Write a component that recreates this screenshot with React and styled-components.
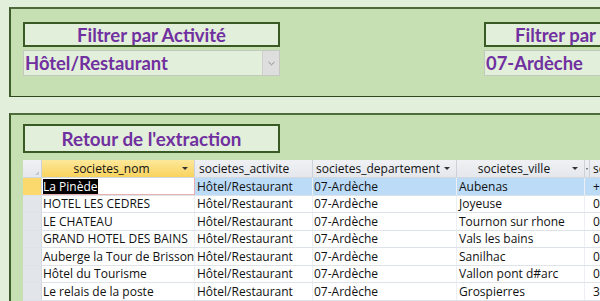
import React from "react";
import styled, { createGlobalStyle } from "styled-components";

const Global = createGlobalStyle`
  html, body { margin: 0; padding: 0; background: #e2efda; overflow: hidden; }
  #root { width: 600px; height: 301px; overflow: hidden; }
`;

const Page = styled.div`
  width: 600px;
  height: 301px;
  overflow: hidden;
  box-sizing: border-box;
  padding: 7px 0 0 9px;
  background: #e2efda;
  display: flex;
  flex-direction: column;
  gap: 16px;
`;

const Panel = styled.section`
  flex: none;
  width: 800px;
  box-sizing: border-box;
  background: #c6e0b4;
  border-style: solid;
  border-color: #4e6b3a #2f4a1d #2f4a1d #3f5c2b;
  border-width: 2px 1px 1px 2px;
  padding: ${(p) => p.$pad};
  display: flex;
  flex-direction: ${(p) => (p.$col ? "column" : "row")};
  gap: ${(p) => p.$gap};
`;

const FilterGroup = styled.div`
  width: 257px;
  display: flex;
  flex-direction: column;
  gap: 3px;
`;

const LabelBox = styled.div`
  box-sizing: border-box;
  width: 257px;
  height: ${(p) => p.$h}px;
  border: 2px solid #395a25;
  background: #e2efda;
  color: #7030a0;
  font-family: "Lato", "Liberation Sans", sans-serif;
  font-weight: 700;
  font-size: ${(p) => p.$size}px;
  display: flex;
  align-items: center;
  justify-content: center;
  white-space: nowrap;
  overflow: hidden;
`;

const Combo = styled.div`
  box-sizing: border-box;
  width: 257px;
  height: 26px;
  border: 1px solid #c3c9c0;
  background: #e2efda;
  display: flex;
  align-items: stretch;
`;

const ComboText = styled.div`
  flex: 1;
  padding-left: 1px;
  color: #7030a0;
  font-family: "Lato", "Liberation Sans", sans-serif;
  font-weight: 700;
  font-size: 18.4px;
  display: flex;
  align-items: center;
  white-space: nowrap;
  overflow: hidden;
`;

const ComboButton = styled.div`
  width: 16px;
  background: #dedede;
  border-left: 1px solid #cfcfcf;
  display: flex;
  align-items: center;
  justify-content: center;
`;

const Grid = styled.div`
  width: 700px;
  display: flex;
  flex-direction: column;
  font-family: "Open Sans", "Noto Sans", sans-serif;
  font-size: 12px;
  color: #111;
`;

const cols = "19px 153px 118px 144px 128px 1fr";

const HeaderRow = styled.div`
  display: grid;
  grid-template-columns: ${cols};
  height: 18px;
  background: #e8eaee;
  border-bottom: 1px solid #d3d7de;
  box-sizing: border-box;
`;

const HeadCell = styled.div`
  box-sizing: border-box;
  display: flex;
  align-items: center;
  padding: 0 ${(p) => (p.$left ? 4 : 3)}px;
  border-right: 1px solid #cdd2da;
  background: ${(p) =>
    p.$active ? "linear-gradient(#fde89a, #f9d35e)" : "linear-gradient(#eff1f4, #e4e7ec)"};
  overflow: hidden;
  position: relative;
`;

const HeadText = styled.span`
  flex: 1;
  min-width: 0;
  text-align: ${(p) => (p.$left ? "left" : "center")};
  white-space: nowrap;
  overflow: hidden;
`;

const Arrow = styled.span`
  flex: none;
  width: 0;
  height: 0;
  margin: 0 3px 0 4px;
  border-left: 3px solid transparent;
  border-right: 3px solid transparent;
  border-top: 3px solid #333;
`;

const Corner = styled.span`
  position: absolute;
  right: 2px;
  bottom: 2px;
  width: 0;
  height: 0;
  border-left: 4px solid transparent;
  border-bottom: 4px solid #c5cad2;
`;

const Row = styled.div`
  display: grid;
  grid-template-columns: ${cols};
  height: 17.5px;
  box-sizing: border-box;
  border-bottom: 1px solid #dee3ea;
  background: ${(p) => (p.$current ? "#bbdbf7" : "#fff")};
`;

const Selector = styled.div`
  background: ${(p) => (p.$current ? "#fcd96c" : "#e2e5ea")};
  border-right: 1px solid #d5dae1;
`;

const Cell = styled.div`
  box-sizing: border-box;
  padding-left: ${(p) => p.$pl ?? 2}px;
  display: flex;
  align-items: center;
  white-space: nowrap;
  overflow: hidden;
  border-right: 1px solid #eceff3;
  ${(p) =>
    p.$editing &&
    `background:#fff; border-right:1px solid #eab0b0; box-shadow: inset 0 -1px 0 #eab0b0;`}
`;

const Selected = styled.span`
  background: #000;
  color: #fff;
  padding: 0 1px 0 0;
  line-height: 15px;
`;

const LastHead = styled.div`
  display: flex;
  align-items: center;
  overflow: hidden;
  white-space: nowrap;
  background: linear-gradient(#eff1f4, #e4e7ec);
`;

const Dot = styled.span`
  width: 0;
  height: 0;
  margin: 0 1px 0 1px;
  border-left: 1px solid transparent;
  border-right: 1px solid transparent;
  border-top: 2px solid #555;
`;

const Sep = styled.span`
  align-self: stretch;
  width: 1px;
  background: #cdd2da;
  margin-right: 3px;
`;

const rows = [
  ["La Pinède", "Hôtel/Restaurant", "07-Ardèche", "Aubenas", "+33 4 75 35 22 09"],
  ["HOTEL LES CEDRES", "Hôtel/Restaurant", "07-Ardèche", "Joyeuse", "04 75 39 40 60"],
  ["LE CHATEAU", "Hôtel/Restaurant", "07-Ardèche", "Tournon sur rhone", "04 75 08 60 22"],
  ["GRAND HOTEL DES BAINS", "Hôtel/Restaurant", "07-Ardèche", "Vals les bains", "04 75 37 42 65"],
  ["Auberge la Tour de Brisson", "Hôtel/Restaurant", "07-Ardèche", "Sanilhac", "04 75 39 13 27"],
  ["Hôtel du Tourisme", "Hôtel/Restaurant", "07-Ardèche", "Vallon pont d#arc", "04 75 88 02 22"],
  ["Le relais de la poste", "Hôtel/Restaurant", "07-Ardèche", "Grospierres", "33 4 75 39 64 50"],
];

const Chevron = () => (
  <svg width="7" height="5" viewBox="0 0 7 5">
    <path d="M0.5 1 L3.5 3.8 L6.5 1" fill="none" stroke="#8a8a8a" strokeWidth="1" />
  </svg>
);

export default function App() {
  return (
    <>
      <Global />
      <Page>
        <Panel $pad="13px 0 20px 12px" $gap="204px">
          <FilterGroup>
            <LabelBox $h={25} $size={18.5}>Filtrer par Activité</LabelBox>
            <Combo>
              <ComboText>Hôtel/Restaurant</ComboText>
              <ComboButton>
                <Chevron />
              </ComboButton>
            </Combo>
          </FilterGroup>
          <FilterGroup>
            <LabelBox $h={25} $size={18.5}>Filtrer par Département</LabelBox>
            <Combo>
              <ComboText>07-Ardèche</ComboText>
              <ComboButton>
                <Chevron />
              </ComboButton>
            </Combo>
          </FilterGroup>
        </Panel>
        <Panel $pad="9px 0 0 12px" $gap="7px" $col>
          <LabelBox $h={29} $size={18.8}>Retour de l'extraction</LabelBox>
          <Grid>
            <HeaderRow>
              <HeadCell>
                <Corner />
              </HeadCell>
              <HeadCell $active>
                <HeadText>societes_nom</HeadText>
                <Arrow />
              </HeadCell>
              <HeadCell $left>
                <HeadText $left>societes_activite</HeadText>
              </HeadCell>
              <HeadCell>
                <HeadText>societes_departement</HeadText>
                <Arrow />
              </HeadCell>
              <HeadCell>
                <HeadText>societes_ville</HeadText>
                <Arrow />
              </HeadCell>
              <LastHead>
                <Dot />
                <Sep />
                societes_telephone
              </LastHead>
            </HeaderRow>
            {rows.map((r, i) => (
              <Row key={i} $current={i === 0}>
                <Selector $current={i === 0} />
                <Cell $editing={i === 0} $pl={1}>
                  {i === 0 ? <Selected>{r[0]}</Selected> : r[0]}
                </Cell>
                <Cell>{r[1]}</Cell>
                <Cell $pl={1}>{r[2]}</Cell>
                <Cell>{r[3]}</Cell>
                <Cell $pl={8}>{r[4]}</Cell>
              </Row>
            ))}
          </Grid>
        </Panel>
      </Page>
    </>
  );
}
